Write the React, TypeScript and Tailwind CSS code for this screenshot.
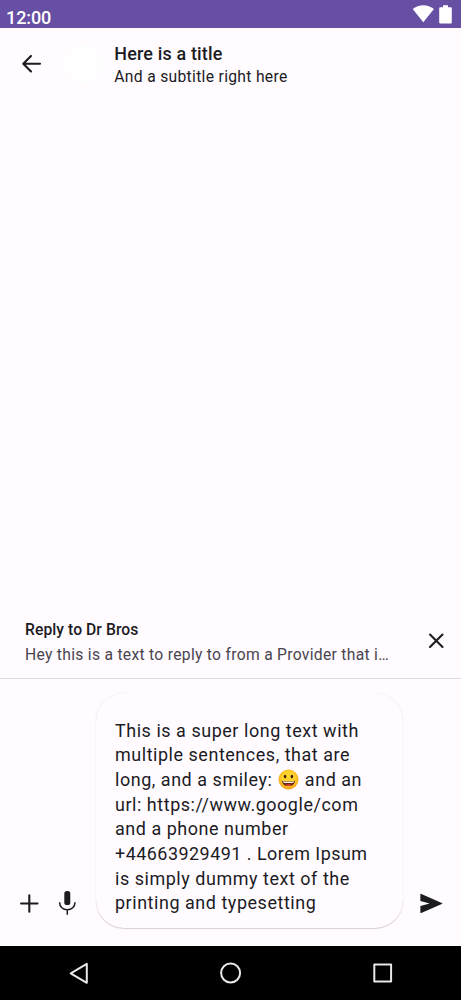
import React from "react";

const messageLines: React.ReactNode[] = [
  "This is a super long text with",
  "multiple sentences, that are",
  <>long, and a smiley: <Smiley /> and an</>,
  "url: https://www.google/com",
  "and a phone number",
  <span className="tracking-[0.48px]">+44663929491 . Lorem Ipsum</span>,
  "is simply dummy text of the",
  "printing and typesetting",
];

function Smiley() {
  return (
    <svg viewBox="0 0 21 21" className="-mt-[4px] mr-[0.5px] ml-px inline-block h-[21px] w-[21px] align-middle" role="img">
      <defs>
        <radialGradient id="face" cx="50%" cy="42%" r="55%">
          <stop offset="0.55" stopColor="#ffd32c" />
          <stop offset="1" stopColor="#f4a51c" />
        </radialGradient>
      </defs>
      <circle cx="10.5" cy="10.5" r="10" fill="url(#face)" />
      <ellipse cx="7.1" cy="7.6" rx="1.3" ry="1.8" fill="#41210b" />
      <ellipse cx="13.9" cy="7.6" rx="1.3" ry="1.8" fill="#41210b" />
      <path d="M4 11.8Q10.5 13.2 17 11.8C16.7 15.4 14 17.2 10.5 17.2S4.3 15.4 4 11.8Z" fill="#6b250b" />
      <path d="M4.8 12.3Q10.5 13.3 16.2 12.3C15.8 13.5 15.1 14 14.2 14H6.8C5.9 14 5.2 13.5 4.8 12.3Z" fill="#fff" />
      <path d="M7.2 16.1Q10.5 14.3 13.8 16.1Q10.5 17.9 7.2 16.1Z" fill="#ef453e" />
    </svg>
  );
}

function StrokeIcon({ d }: { d: string }) {
  return (
    <svg viewBox="0 0 27 27" fill="none" stroke="#1c1b1f" strokeWidth="2.1" strokeLinecap="round" strokeLinejoin="round" className="h-[27px] w-[27px] shrink-0">
      <path d={d} />
    </svg>
  );
}

export default function App() {
  return (
    <div className="flex h-[1000px] w-[461px] flex-col overflow-hidden bg-[#fffbff] font-['Roboto','Noto_Sans',sans-serif] text-[#1c1b1f]">
      <header className="flex h-7 shrink-0 justify-between bg-[#6750a4] pl-[6px] text-white">
        <span className="pt-[6px] text-[18px] leading-[23px] font-medium tracking-[-0.1px]">12:00</span>
        <div className="flex gap-[5px] pt-[5px] pr-[9px]">
          <svg viewBox="0 0 22 18" fill="#fff" className="h-[18px] w-[22px]">
            <path d="M0.7 4C6.7-1.1 15.9-1.1 21.9 4L11.3 17.3Z" />
          </svg>
          <svg viewBox="0 0 13 19" fill="#fff" className="h-[19px] w-[13px]">
            <path d="M4 0.3h5v2h2.8a1 1 0 0 1 1 1v14.2a1 1 0 0 1-1 1H1.2a1 1 0 0 1-1-1V3.3a1 1 0 0 1 1-1H4Z" />
          </svg>
        </div>
      </header>

      <div className="flex h-[72px] shrink-0 items-start pt-[15px] pl-[18px]">
        <div className="pt-[7px]">
          <StrokeIcon d="M22 13.7H5.5M13 5.9 5.3 13.7 13 21.5" />
        </div>
        <div className="mt-px ml-[18px] h-10 w-10 rounded-full bg-[#fffeff]" />
        <div className="ml-[11px] whitespace-nowrap">
          <h1 className="h-[22px] pl-[0.3px] text-[17.94px] leading-[22px] font-medium tracking-[0.17px]">Here is a title</h1>
          <p className="pt-px pl-[0.3px] text-[15.7px] leading-[22px] tracking-[0.3px]">And a subtitle right here</p>
        </div>
      </div>

      <main className="flex-1" />

      <section className="flex h-[69px] shrink-0 justify-between border-b border-[#e1dce2] pr-[11px] pl-[25px]">
        <div className="pt-[7px] whitespace-nowrap">
          <h2 className="text-[15.7px] leading-[25px] font-medium tracking-[0.06px]">Reply to Dr Bros</h2>
          <p className="pt-px text-[15.7px] leading-[24px] tracking-[0.28px] text-[#49454f]">Hey this is a text to reply to from a Provider that i…</p>
        </div>
        <div className="pt-[17px]">
          <StrokeIcon d="M7 7.6 19.5 20.1M19.5 7.6 7 20.1" />
        </div>
      </section>

      <footer className="flex h-[267px] shrink-0 items-end pt-[13px] pb-[18px]">
        <div className="flex w-24 gap-[11px] pb-[11px] pl-4">
          <StrokeIcon d="M13.3 5.3v16.4M5.1 13.5h16.4" />
          <svg viewBox="0 0 27 27" fill="none" stroke="#1c1b1f" strokeWidth="1.5" className="h-[27px] w-[27px] shrink-0">
            <rect x="10.3" y="1.1" width="6" height="14" rx="2.7" fill="#1c1b1f" stroke="none" />
            <path d="M5.6 12.2C5.6 16.8 9 19.7 13.3 19.7S21 16.8 21 12.2M13.3 19.7v5" />
          </svg>
        </div>
        <div className="h-[235px] w-[307px] shrink-0 rounded-[28px] bg-[#fffbff] pt-[25.6px] pl-[19px] text-[17.94px] leading-[24.67px] tracking-[0.55px] whitespace-nowrap shadow-[0_1px_1px_rgba(70,50,70,0.20),0_0_1px_rgba(70,50,70,0.14)]">
          {messageLines.map((line, i) => (
            <div key={i} className="h-[24.67px]">{line}</div>
          ))}
        </div>
        <div className="pb-[11px] pl-[14px]">
          <svg viewBox="0 0 24 24" fill="#1c1b1f" className="h-[27px] w-[27px]">
            <path d="M3.2 20.4a.6.6 0 0 1-.2-.5v-5.6L11.2 12 3 9.7V4.1a.6.6 0 0 1 .9-.5L22 11.5a.5.5 0 0 1 0 1L3.8 20.4a.6.6 0 0 1-.6 0Z" />
          </svg>
        </div>
      </footer>

      <nav className="flex h-[54px] shrink-0 items-center bg-black pl-[67px]">
        <svg viewBox="0 0 24 24" fill="none" stroke="#e8e8e8" strokeWidth="2" strokeLinejoin="round" className="h-6 w-6">
          <path d="M19.8 2.8v19L3.7 12.3Z" />
        </svg>
        <svg viewBox="0 0 24 24" fill="none" stroke="#e8e8e8" strokeWidth="2" className="ml-[128px] h-6 w-6">
          <circle cx="11.6" cy="12" r="9.5" />
        </svg>
        <svg viewBox="0 0 24 24" fill="none" stroke="#e8e8e8" strokeWidth="2" strokeLinejoin="round" className="ml-[128px] h-6 w-6">
          <path d="M3.3 3.5h16.8v16.9H3.3Z" />
        </svg>
      </nav>
    </div>
  );
}
